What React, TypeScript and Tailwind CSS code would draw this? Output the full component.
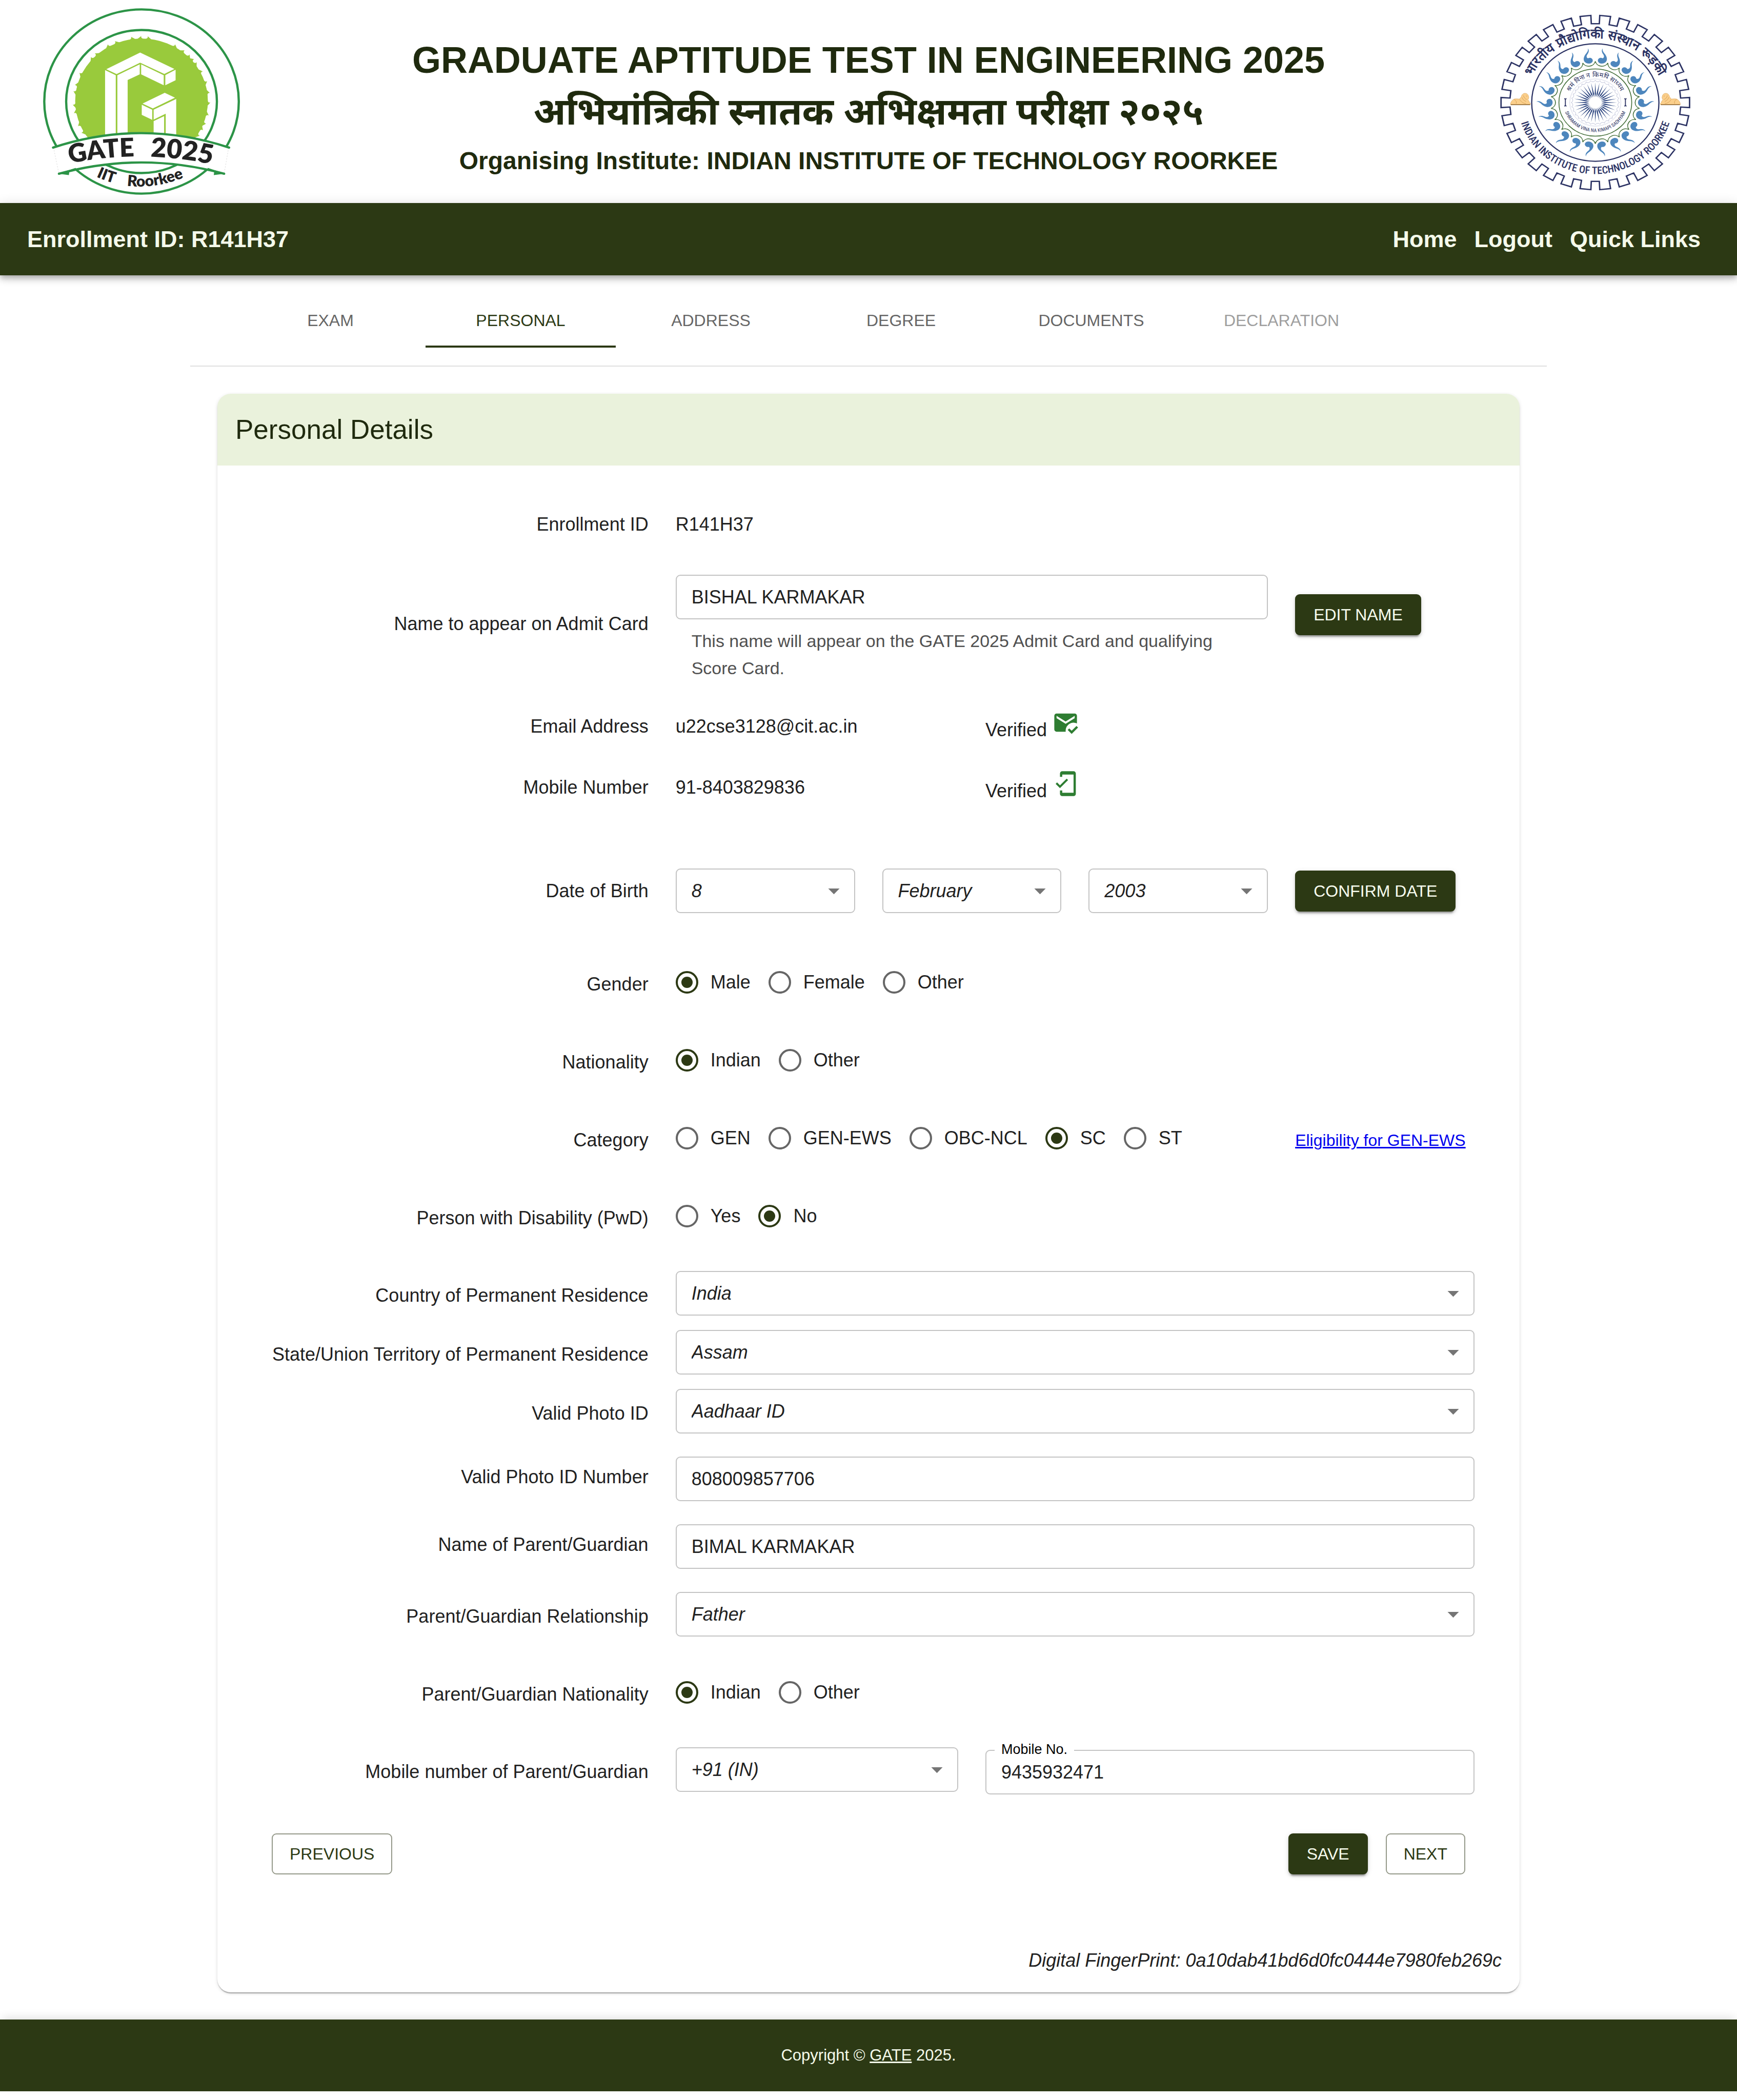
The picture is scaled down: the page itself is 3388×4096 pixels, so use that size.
import React from "react";
import { MdArrowDropDown, MdMarkEmailRead, MdMobileFriendly } from "react-icons/md";

const NAVY = "#2b3263";
const LEAF = "#2c9447";
const LIME = "#99ca3c";
const INK = "#222222";

function GateLogo() {
  const angles = [-98, -91, -84, -120, -112, -138, -132, -155, -165, -172, 170, 176, 158, 150, -60, -52, -45, -41, -36, -28, -17, -8, 2, 12, 21, 26, 33];
  return (
    <svg viewBox="92 17 441 418" className="h-[368px] w-[389px]" role="img" aria-label="GATE 2025 IIT Roorkee">
      <ellipse cx="312" cy="226" rx="215.5" ry="204" fill="#fff" stroke={LEAF} strokeWidth="5" />
      <ellipse cx="312" cy="226" rx="167" ry="158.5" fill="#fff" stroke={LEAF} strokeWidth="5" />
      <ellipse cx="312" cy="225" rx="147" ry="138.5" fill={LIME} />
      <g fill={LIME}>
        {angles.map((a, i) => (
          <path
            key={a}
            d="M-8 2 C-5 -1 -3 -2 2 -6 C1 -2 3 -1 9 2 Z"
            transform={`translate(312 225) scale(1.06 1) rotate(${a + 90}) translate(0 -138) scale(${i % 2 ? 1 : -1} 1)`}
          />
        ))}
      </g>
      <g transform="scale(.4464 .4082)" fill="#fff">
        <path d="M692 288 862 377 812 404 692 343 575 405 524 378Z" />
        <path d="M518 383 571 411 571 745 518 745Z" />
        <path d="M579 411 690 352 690 406 630 437 630 745 579 745Z" />
        <path d="M697 352 809 411 809 465 697 406Z" />
        <path d="M817 410 868 381 868 438 817 465Z" />
        <path d="M814 506 865 533 755 591 704 565Z" />
        <path d="M700 571 752 598 752 653 700 626Z" />
        <path d="M759 598 871 540 871 745 819 745 819 620 759 652Z" />
        <path d="M759 660 811 633 811 745 759 745Z" />
      </g>
      <path d="M117 328 Q311 264 505 328 L495 386 Q311 336 129 386Z" fill="#fff" />
      <path d="M117 328 L129 386 M505 328 L495 386" stroke="#d8d8d8" strokeWidth="1" strokeDasharray="3 3" />
      <path d="M116 328 Q311 264 506 328 M129 386 Q311 336 495 386" fill="none" stroke={LEAF} strokeWidth="5" strokeLinecap="round" />
      <path d="M127 386 L166 373 L168 377 L152 382 L151 389Z M497 386 L459 373 L457 377 L473 382 L472 389Z" fill={LEAF} />
      <path id="gate-arc" d="M146 365 Q311 329 480 368" fill="none" />
      <path id="iit-arc" d="M208 391 Q311 441 430 384" fill="none" />
      <g fontFamily="Lato, sans-serif" fontWeight="800" fill={INK}>
        <text fontSize="57">
          <textPath href="#gate-arc" startOffset="7">GATE</textPath>
        </text>
        <text fontSize="59">
          <textPath href="#gate-arc" startOffset="187">2025</textPath>
        </text>
        <text fontSize="34">
          <textPath href="#iit-arc" startOffset="4">IIT</textPath>
        </text>
        <text fontSize="34">
          <textPath href="#iit-arc" startOffset="75">Roorkee</textPath>
        </text>
      </g>
    </svg>
  );
}

function polar(r: number, deg: number) {
  const t = (deg * Math.PI) / 180;
  return `${(r * Math.sin(t)).toFixed(1)} ${(-r * Math.cos(t)).toFixed(1)}`;
}

function RoorkeeLogo() {
  let gear = "";
  for (let i = 0; i < 30; i++) {
    const c = 6 + i * 12;
    gear += `${i ? "L" : "M"}${polar(427, c - 3.3)} L${polar(472, c - 3.3)} L${polar(472, c + 3.3)} L${polar(427, c + 3.3)} `;
  }
  let scallop = `M${polar(223, 0)}`;
  for (let i = 1; i <= 22; i++) scallop += ` A34 34 0 0 0 ${polar(223, (i * 360) / 22)}`;
  let rim = `M${polar(121, 0)}`;
  for (let i = 1; i <= 32; i++) rim += ` A13 13 0 0 0 ${polar(121, (i * 360) / 32)}`;
  const paisley =
    "M-20 -228 C-20 -240 -8 -247 2 -242 C10 -247 9 -256 2 -264 C-7 -274 -11 -285 -5 -295 C-6 -285 -1 -278 6 -271 C22 -257 31 -236 18 -221 C6 -208 -18 -212 -20 -228Z";
  const half = Array.from({ length: 11 }, (_, i) => ((i + 0.5) * 360) / 22);
  const lion =
    "M0 60 C0 48 8 36 20 31 C30 29 42 31 50 31 C52 26 55 22 58 20 C60 8 68 0 78 0 C90 0 96 8 98 18 C100 24 98 30 94 34 C96 38 102 42 102 48 L108 56 L106 62 L0 62Z";
  const mane = "M62 22 C66 32 72 40 84 44 M70 12 C72 22 78 30 88 34 M84 14 L90 16 M20 34 C30 38 34 48 30 56 M50 34 C56 44 66 54 84 56";
  return (
    <svg viewBox="290 78 1038 960" className="h-[346px] w-[374px]" role="img" aria-label="Indian Institute of Technology Roorkee">
      <g transform="translate(808 558) scale(1.083 1)" fill="none">
        <path d={`${gear}Z`} stroke={NAVY} strokeWidth="7" />
        <circle r="318" stroke={NAVY} strokeWidth="6" />
        <g fill="#4d86bd">
          {half.map((a) => (
            <path key={a} d={paisley} transform={`rotate(${a})`} />
          ))}
          {half.map((a) => (
            <path key={-a} d={paisley} transform={`scale(-1 1) rotate(${a})`} />
          ))}
        </g>
        <path d={scallop} stroke="#3f6b35" strokeWidth="4" />
        <circle r="182" stroke="#3f6b35" strokeWidth="4" />
        <circle r="128" stroke="#c3c6dc" strokeWidth="2" />
        <path d={rim} stroke="#a9aecb" strokeWidth="2" />
        <g fill="#27407c">
          {Array.from({ length: 32 }, (_, i) => (
            <path key={i} d="M0 -30 L3 -48 L0 -108 L-3 -48Z" transform={`rotate(${i * 11.25})`} />
          ))}
        </g>
      </g>
      <g stroke={NAVY} strokeWidth="5" fill="none">
        <path d="M641 535 L646 542 L651 535 M646 542 V572 M641 579 L646 572 L651 579" />
        <path d="M966 535 L971 542 L976 535 M971 542 V572 M966 579 L971 572 L976 579" />
      </g>
      {["translate(349 508)", "translate(1268 508) scale(-1 1)"].map((t) => (
        <g key={t} transform={t}>
          <path d={lion} fill="#fbcf8b" stroke="#d9a45a" strokeWidth="2" />
          <path d={mane} fill="none" stroke="#c98f45" strokeWidth="2" />
          <path d="M2 62 H106" stroke="#8a6534" strokeWidth="4" />
        </g>
      ))}
      <path id="iitr-hi" d="M431 558 A377 348 0 0 1 1185 558" fill="none" />
      <path id="iitr-en" d="M389 558 A419 387 0 0 0 1227 558" fill="none" />
      <path id="motto-hi" d="M656 558 A152 140 0 0 1 960 558" fill="none" />
      <path id="motto-en" d="M635 558 A173 160 0 0 0 981 558" fill="none" />
      <g fill={NAVY} fontFamily="'Liberation Sans', Arial, sans-serif">
        <text fontSize="70" fontWeight="700">
          <textPath href="#iitr-hi" startOffset="50%" textAnchor="middle">भारतीय प्रौद्योगिकी संस्थान रूड़की</textPath>
        </text>
        <text fontSize="56" fontWeight="500" fontFamily="'Roboto Condensed', 'Liberation Sans Narrow', sans-serif">
          <textPath href="#iitr-en" startOffset="50%" textAnchor="middle">INDIAN INSTITUTE OF TECHNOLOGY ROORKEE</textPath>
        </text>
        <text fontSize="35">
          <textPath href="#motto-hi" startOffset="50%" textAnchor="middle">श्रमं विना न किमपि साध्यम</textPath>
        </text>
        <text fontSize="27" fontFamily="'Roboto Condensed', 'Liberation Sans Narrow', sans-serif">
          <textPath href="#motto-en" startOffset="50%" textAnchor="middle">SHRAMAM VINA NA KIMAPI SADHYAM</textPath>
        </text>
      </g>
    </svg>
  );
}

const FIELD = "h-[87px] w-full rounded-[9px] border-2 border-[#c4c4c4] bg-white pl-[29px] text-[36px] text-[#212121] outline-none";
const CONTAINED =
  "h-[80px] rounded-[9px] bg-[#2c3914] px-[36px] text-[32px] text-[#f7fcee] uppercase shadow-[0_7px_2px_-4px_rgba(0,0,0,0.2),0_4px_4px_rgba(0,0,0,0.14),0_2px_11px_rgba(0,0,0,0.12)]";
const OUTLINED = "h-[80px] rounded-[9px] border-2 border-[#95998a] px-[33px] text-[32px] text-[#2c3914] uppercase";

function Row({ className = "", children }: { className?: string; children: React.ReactNode }) {
  return <div className={`grid grid-cols-12 items-center gap-x-[53px] ${className}`}>{children}</div>;
}

function Label({ htmlFor, id, className = "", children }: { htmlFor?: string; id?: string; className?: string; children: React.ReactNode }) {
  const cls = `col-span-4 text-right leading-[46px] ${className}`;
  return htmlFor ? (
    <label htmlFor={htmlFor} className={cls}>{children}</label>
  ) : (
    <span id={id} className={cls}>{children}</span>
  );
}

function Select({ id, label, value, className }: { id: string; label?: string; value: string; className: string }) {
  return (
    <div className={`relative ${className}`}>
      <select id={id} aria-label={label} defaultValue={value} className={`${FIELD} block appearance-none pr-[70px] italic`}>
        <option>{value}</option>
      </select>
      <MdArrowDropDown className="pointer-events-none absolute top-[17px] right-[15px] size-[53px] text-[#757575]" />
    </div>
  );
}

function Radios({ name, labelledBy, options, value, className }: { name: string; labelledBy: string; options: string[]; value: string; className: string }) {
  return (
    <div role="radiogroup" aria-labelledby={labelledBy} className={`flex gap-[35px] ${className}`}>
      {options.map((o) => (
        <label key={o} className="flex items-center gap-6 leading-[54px]">
          <input
            type="radio"
            name={name}
            value={o}
            defaultChecked={o === value}
            className="grid size-[44px] shrink-0 appearance-none place-content-center rounded-full border-4 border-[#666666] before:size-[22px] before:rounded-full checked:border-[#2c3914] checked:before:bg-[#2c3914]"
          />
          {o}
        </label>
      ))}
    </div>
  );
}

const TABS = ["Exam", "Personal", "Address", "Degree", "Documents", "Declaration"];

export default function App() {
  return (
    <div className="bg-white pb-4 font-['Liberation_Sans',Arial,sans-serif] text-[36px] text-[#212121]">
      <header className="flex h-[396px] items-center justify-between px-[82px]">
        <div className="flex w-[389px] justify-center">
          <GateLogo />
        </div>
        <div className="self-start pt-[64px] text-center font-bold text-[#1f2a0e]">
          <h1 className="text-[72px] leading-[106px]">GRADUATE APTITUDE TEST IN ENGINEERING 2025</h1>
          <p className="h-[110px] font-['Noto_Sans_Devanagari',sans-serif] text-[74px] leading-[110px]" lang="hi">
            अभियांत्रिकी स्नातक अभिक्षमता परीक्षा २०२५
          </p>
          <p className="text-[48px] leading-[68px]">Organising Institute: INDIAN INSTITUTE OF TECHNOLOGY ROORKEE</p>
        </div>
        <div className="flex w-[389px] justify-center pt-1">
          <RoorkeeLogo />
        </div>
      </header>

      <nav className="relative flex h-[141px] items-center justify-between bg-[#2c3914] pr-[71px] pl-[53px] text-[45px] font-bold text-[#f5faeb] shadow-[0_4px_9px_-2px_rgba(0,0,0,0.2),0_9px_11px_rgba(0,0,0,0.14),0_2px_22px_rgba(0,0,0,0.12)]">
        <span>Enrollment ID: R141H37</span>
        <div className="flex gap-[34px]">
          <a href="#home">Home</a>
          <a href="#logout">Logout</a>
          <a href="#links">Quick Links</a>
        </div>
      </nav>

      <main className="mx-auto max-w-[2646px]">
        <div role="tablist" className="flex border-b-2 border-[#e0e0e0] px-[88px] py-[35px]">
          {TABS.map((t) => (
            <button
              key={t}
              role="tab"
              type="button"
              aria-selected={t === "Personal"}
              disabled={t === "Declaration"}
              className="h-[106px] w-[371px] border-y-4 border-transparent text-[32px] text-[#666666] uppercase disabled:text-[#9e9e9e] aria-selected:border-b-[#2c3914] aria-selected:text-[#2c3914]"
            >
              {t}
            </button>
          ))}
        </div>

        <div className="p-[53px]">
          <form
            className="overflow-hidden rounded-[26px] bg-white shadow-[0_4px_2px_-2px_rgba(0,0,0,0.2),0_2px_2px_rgba(0,0,0,0.14),0_2px_7px_rgba(0,0,0,0.12)]"
            onSubmit={(e) => e.preventDefault()}
          >
            <h2 className="bg-[#eaf2dc] px-[35px] text-[53px] leading-[140px] text-[#1f2a0e]">Personal Details</h2>

            <div className="px-[88px] pt-[88px]">
              <Row>
                <Label className="py-1">Enrollment ID</Label>
                <span className="col-span-4">R141H37</span>
              </Row>

              <Row className="mt-[71px]">
                <Label htmlFor="name" className="pb-[18px]">Name to appear on Admit Card</Label>
                <div className="col-span-6">
                  <input id="name" defaultValue="BISHAL KARMAKAR" className={`${FIELD} block`} />
                  <p className="mx-[31px] mt-4 text-[34px] leading-[53px] text-[#505050]">
                    This name will appear on the GATE 2025 Admit Card and qualifying Score Card.
                  </p>
                </div>
                <div className="col-span-2 pb-[54px]">
                  <button type="button" className={`${CONTAINED} whitespace-nowrap`}>Edit Name</button>
                </div>
              </Row>

              <Row className="mt-[53px]">
                <Label>Email Address</Label>
                <span className="col-span-3">u22cse3128@cit.ac.in</span>
                <span className="col-span-3 leading-[54px]">
                  Verified <MdMarkEmailRead className="inline-block size-[53px] align-baseline text-[#2e7d32]" />
                </span>
              </Row>

              <Row className="mt-[51px]">
                <Label>Mobile Number</Label>
                <span className="col-span-3">91-8403829836</span>
                <span className="col-span-3 leading-[54px]">
                  Verified <MdMobileFriendly className="inline-block size-[53px] align-baseline text-[#2e7d32]" />
                </span>
              </Row>

              <Row className="mt-[124px]">
                <Label htmlFor="day">Date of Birth</Label>
                <Select id="day" value="8" className="col-span-2" />
                <Select id="month" label="Month of birth" value="February" className="col-span-2" />
                <Select id="year" label="Year of birth" value="2003" className="col-span-2" />
                <div className="col-span-2">
                  <button type="button" className={`${CONTAINED} block whitespace-nowrap`}>Confirm Date</button>
                </div>
              </Row>

              <Row className="mt-[108px]">
                <Label id="gender" className="pt-2">Gender</Label>
                <Radios name="gender" labelledBy="gender" options={["Male", "Female", "Other"]} value="Male" className="col-span-8" />
              </Row>

              <Row className="mt-[98px]">
                <Label id="nationality" className="pt-2">Nationality</Label>
                <Radios name="nationality" labelledBy="nationality" options={["Indian", "Other"]} value="Indian" className="col-span-8" />
              </Row>

              <Row className="mt-[98px]">
                <Label id="category" className="pt-2">Category</Label>
                <Radios name="category" labelledBy="category" options={["GEN", "GEN-EWS", "OBC-NCL", "SC", "ST"]} value="SC" className="col-span-6" />
                <a href="#eligibility" className="col-span-2 pt-2 text-[32px] leading-[46px] whitespace-nowrap text-[#0000ee] underline">
                  Eligibility for GEN-EWS
                </a>
              </Row>

              <Row className="mt-[98px]">
                <Label id="pwd" className="pt-2">Person with Disability (PwD)</Label>
                <Radios name="pwd" labelledBy="pwd" options={["Yes", "No"]} value="No" className="col-span-8" />
              </Row>

              <Row className="mt-[80px]">
                <Label htmlFor="country" className="pt-2">Country of Permanent Residence</Label>
                <Select id="country" value="India" className="col-span-8" />
              </Row>

              <Row className="mt-[28px]">
                <Label htmlFor="state" className="pt-2">State/Union Territory of Permanent Residence</Label>
                <Select id="state" value="Assam" className="col-span-8" />
              </Row>

              <Row className="mt-[28px]">
                <Label htmlFor="photo-id" className="pt-2">Valid Photo ID</Label>
                <Select id="photo-id" value="Aadhaar ID" className="col-span-8" />
              </Row>

              <Row className="mt-[45px]">
                <Label htmlFor="photo-number" className="pb-2">Valid Photo ID Number</Label>
                <input id="photo-number" defaultValue="808009857706" className={`${FIELD} col-span-8`} />
              </Row>

              <Row className="mt-[45px]">
                <Label htmlFor="parent" className="pb-2">Name of Parent/Guardian</Label>
                <input id="parent" defaultValue="BIMAL KARMAKAR" className={`${FIELD} col-span-8`} />
              </Row>

              <Row className="mt-[45px]">
                <Label htmlFor="relationship" className="pt-2">Parent/Guardian Relationship</Label>
                <Select id="relationship" value="Father" className="col-span-8" />
              </Row>

              <Row className="mt-[82px]">
                <Label id="parent-nationality" className="pt-2">Parent/Guardian Nationality</Label>
                <Radios name="parent-nationality" labelledBy="parent-nationality" options={["Indian", "Other"]} value="Indian" className="col-span-8" />
              </Row>

              <Row className="mt-[80px]">
                <Label htmlFor="code" className="pt-1">Mobile number of Parent/Guardian</Label>
                <Select id="code" value="+91 (IN)" className="col-span-3 self-start" />
                <div className="relative col-span-5 pt-[5px]">
                  <input id="mobile" defaultValue="9435932471" className={`${FIELD} block`} />
                  <label htmlFor="mobile" className="absolute -top-3 left-[18px] bg-white px-[13px] text-[27px] leading-[32px] text-black">
                    Mobile No.
                  </label>
                </div>
              </Row>

              <div className="mt-[76px] flex justify-between px-[18px]">
                <button type="button" className={OUTLINED}>Previous</button>
                <div className="flex gap-[35px]">
                  <button type="submit" className={CONTAINED}>Save</button>
                  <button type="button" className={OUTLINED}>Next</button>
                </div>
              </div>
            </div>

            <p className="mt-[141px] px-[35px] pb-[35px] text-right leading-[54px] italic">
              Digital FingerPrint: 0a10dab41bd6d0fc0444e7980feb269c
            </p>
          </form>
        </div>
      </main>

      <footer className="flex h-[140px] items-center justify-center bg-[#2c3914] text-[31px] text-[#f5faeb] shadow-[0_-6px_18px_-4px_rgba(0,0,0,0.14)]">
        <p>
          Copyright © <a href="#gate" className="underline">GATE</a> 2025.
        </p>
      </footer>
    </div>
  );
}
